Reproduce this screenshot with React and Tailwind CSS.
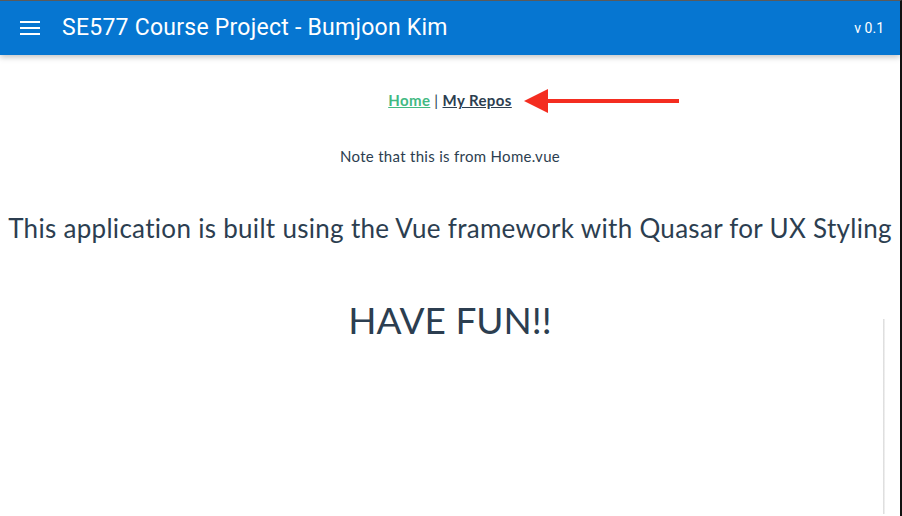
export default function App() {
  return (
    <div className="relative w-[902px] h-[516px] overflow-hidden bg-white border-t border-r-2 border-t-[#5a5a5a] border-r-[#111]">
      <header className="h-[54px] bg-[#0676d1] flex items-center pl-5 pr-4 text-white shadow-[0_2px_6px_rgba(0,0,0,0.25)] font-['Roboto',sans-serif]">
        <svg width="20" height="14" viewBox="0 0 20 14" className="mr-[22px]">
          <rect x="0" y="0" width="20" height="2" fill="white" />
          <rect x="0" y="6" width="20" height="2" fill="white" />
          <rect x="0" y="12" width="20" height="2" fill="white" />
        </svg>
        <h1 className="text-[23px] tracking-[0.25px] flex-1">SE577 Course Project - Bumjoon Kim</h1>
        <span className="text-[14px]">v 0.1</span>
      </header>

      <main className="flex flex-col items-center text-[#2c3e50] font-['Lato',sans-serif]">
        <nav className="mt-[35px] text-[15px] leading-[20px] tracking-[0.4px] font-bold relative">
          <a href="#" className="text-[#42b983] underline">Home</a>
          <span className="font-normal mx-1">|</span>
          <a href="#" className="underline">My Repos</a>
          <svg width="156" height="24" viewBox="0 0 156 24" className="absolute left-full ml-3 top-[-1px]">
            <rect x="20" y="10" width="135" height="4" fill="#f42d20" />
            <polygon points="0,12 24,0 24,24" fill="#f42d20" />
          </svg>
        </nav>
        <p className="mt-[36px] text-[15px] leading-[20px] tracking-[0.3px]">Note that this is from Home.vue</p>
        <p className="mt-[46px] text-[26px] leading-[32px] tracking-[0.3px] whitespace-nowrap">This application is built using the Vue framework with Quasar for UX Styling</p>
        <p className="mt-[54px] text-[37px] leading-[44px]">HAVE FUN!!</p>
      </main>

      <div className="absolute left-[883px] top-[318px] w-[2px] h-[195px] bg-gradient-to-r from-[#d8d8d8] to-[#f5f5f5]" />
    </div>
  )
}
